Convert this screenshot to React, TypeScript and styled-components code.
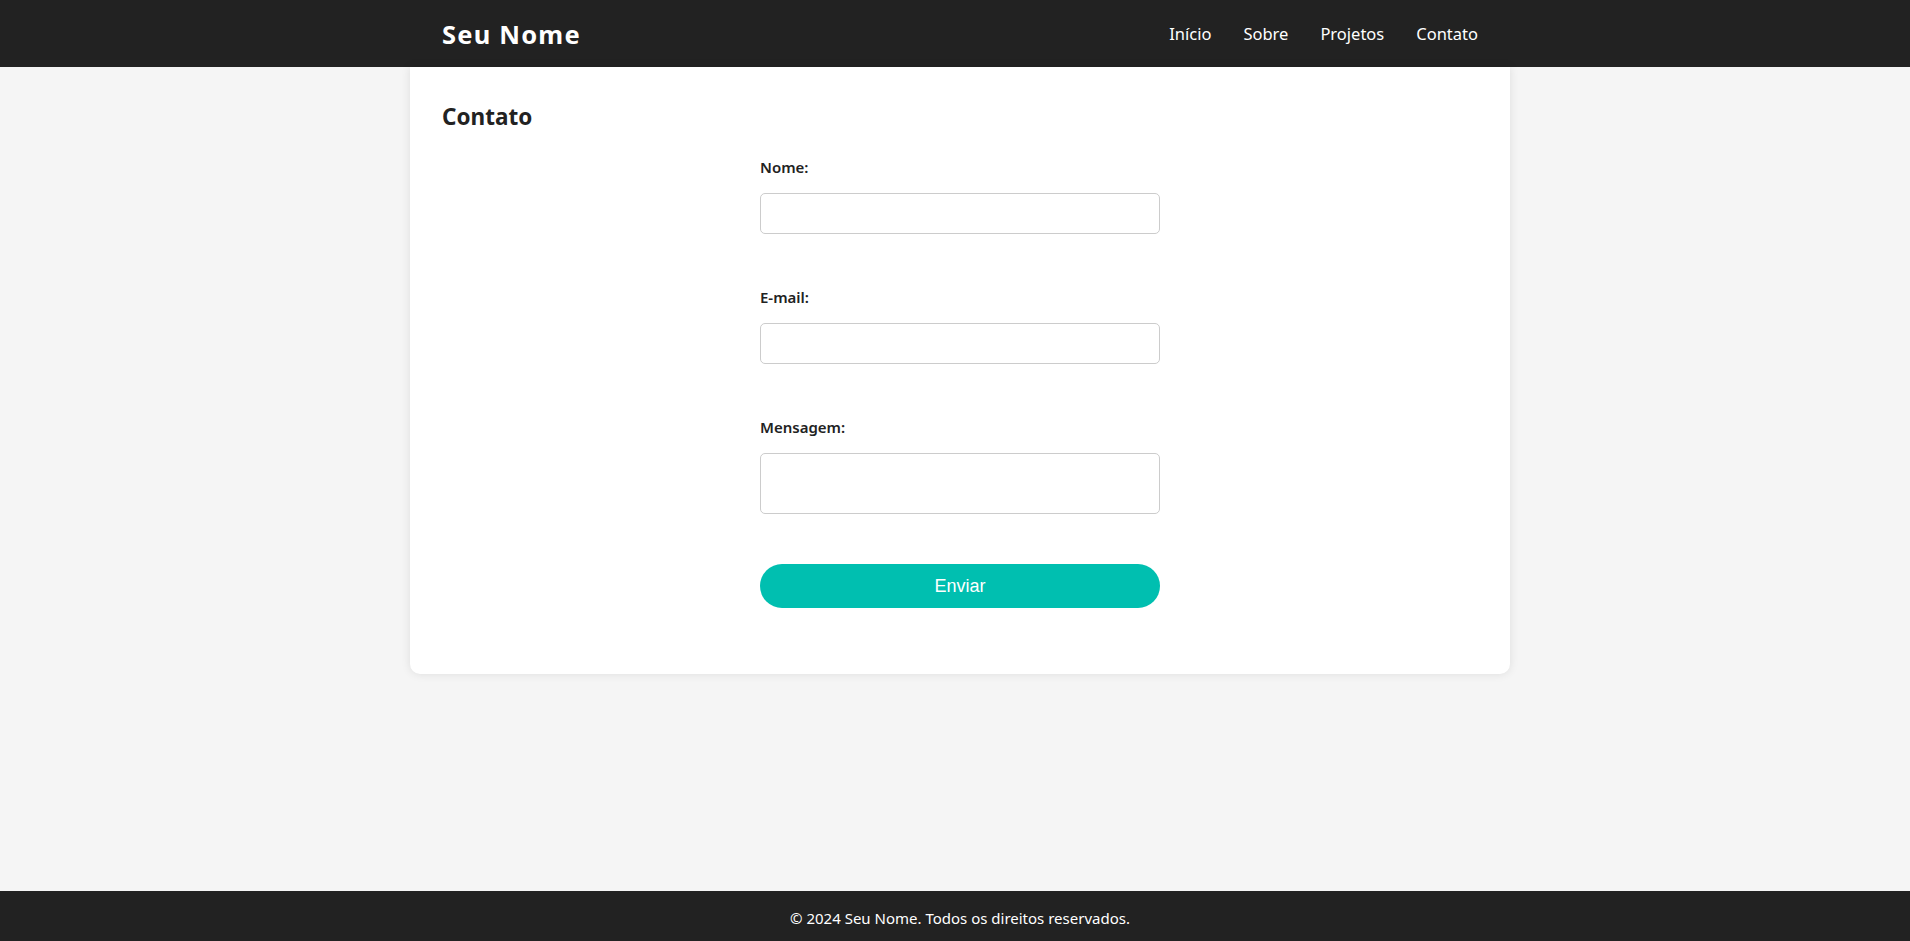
import React from "react"
import styled, { createGlobalStyle } from "styled-components"

const GlobalStyle = createGlobalStyle`
  * {
    box-sizing: border-box;
  }
  html, body {
    margin: 0;
    padding: 0;
    height: 100%;
  }
  body {
    background: #f5f5f5;
    color: #222;
    font-family: "Segoe UI", "Noto Sans", sans-serif;
  }
  #root {
    min-height: 100vh;
    display: flex;
    flex-direction: column;
  }
`

const Header = styled.header`
  background: #222;
  color: #fff;
  height: 67px;
  flex-shrink: 0;
`

const HeaderInner = styled.div`
  width: 1100px;
  height: 100%;
  margin-left: calc(50% - 545px);
  padding: 0 32px;
  display: flex;
  align-items: center;
  justify-content: space-between;
`

const Logo = styled.h1`
  margin: 0;
  font-size: 25.5px;
  font-weight: 700;
  line-height: 32px;
  letter-spacing: 1.2px;
`

const Nav = styled.nav`
  display: flex;
  gap: 32px;
  a {
    color: #fff;
    text-decoration: none;
    font-size: 16.5px;
    line-height: 24px;
  }
`

const Main = styled.main`
  flex: 1;
`

const Card = styled.section`
  width: 1100px;
  margin-left: calc(50% - 545px);
  background: #fff;
  border-radius: 0 0 10px 10px;
  box-shadow: 0 0 10px rgba(0, 0, 0, 0.1);
  padding: 35px 32px 66px;
`

const Title = styled.h2`
  margin: 0 0 25px;
  font-size: 22.5px;
  line-height: 30px;
  font-weight: 700;
  color: #222;
`

const Form = styled.form`
  width: 400px;
  margin: 0 auto;
  display: flex;
  flex-direction: column;
`

const Group = styled.div`
  display: flex;
  flex-direction: column;
  margin-bottom: 53px;
`

const Label = styled.label`
  font-size: 15px;
  font-weight: 600;
  line-height: 20px;
  margin-bottom: 16px;
  color: #222;
`

const Input = styled.input`
  height: 41px;
  border: 1px solid #ccc;
  border-radius: 5px;
  padding: 8px 10px;
  font-size: 16px;
  outline: none;
`

const TextArea = styled.textarea`
  height: 61px;
  border: 1px solid #ccc;
  border-radius: 5px;
  padding: 8px 10px;
  font-size: 16px;
  resize: none;
  outline: none;
  font-family: inherit;
`

const Button = styled.button`
  margin-top: -3px;
  height: 44px;
  border: none;
  border-radius: 22px;
  background: #00bfb0;
  color: #fff;
  font-family: "Liberation Sans", Arial, sans-serif;
  font-size: 18px;
  cursor: pointer;
`

const Footer = styled.footer`
  background: #222;
  color: #fff;
  height: 50px;
  flex-shrink: 0;
  display: flex;
  align-items: center;
  justify-content: center;
  padding: 3px 0 0 10px;
  font-size: 15px;
`

const App = () => (
  <>
    <GlobalStyle />
    <Header>
      <HeaderInner>
        <Logo>Seu Nome</Logo>
        <Nav>
          <a href="#">Início</a>
          <a href="#">Sobre</a>
          <a href="#">Projetos</a>
          <a href="#">Contato</a>
        </Nav>
      </HeaderInner>
    </Header>
    <Main>
      <Card>
        <Title>Contato</Title>
        <Form onSubmit={e => e.preventDefault()}>
          <Group>
            <Label htmlFor="nome">Nome:</Label>
            <Input id="nome" type="text" />
          </Group>
          <Group>
            <Label htmlFor="email">E-mail:</Label>
            <Input id="email" type="email" />
          </Group>
          <Group>
            <Label htmlFor="mensagem">Mensagem:</Label>
            <TextArea id="mensagem" />
          </Group>
          <Button type="submit">Enviar</Button>
        </Form>
      </Card>
    </Main>
    <Footer>© 2024 Seu Nome. Todos os direitos reservados.</Footer>
  </>
)

export default App
